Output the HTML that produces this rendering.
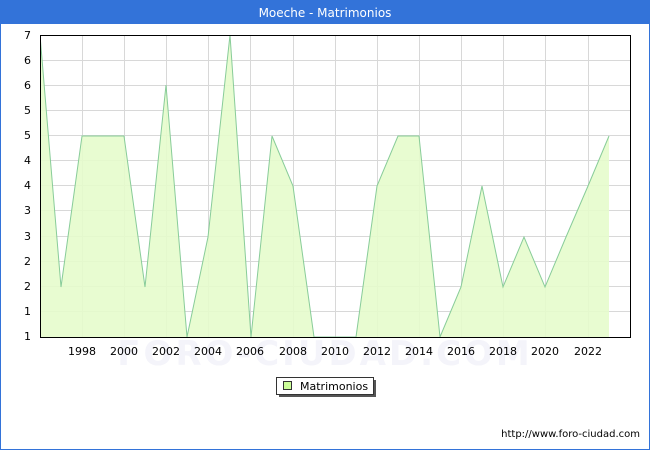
<!DOCTYPE html>
<html><head><style>
body{margin:0;width:650px;height:450px;overflow:hidden;font-family:"DejaVu Sans","Liberation Sans",sans-serif;}
</style></head><body>
<svg width="650" height="450" xmlns="http://www.w3.org/2000/svg" font-family="DejaVu Sans, Liberation Sans, sans-serif">
<rect x="0" y="0" width="650" height="450" fill="#fff"/>
<rect x="0.5" y="0.5" width="649" height="449" fill="none" stroke="#3373d9"/>
<rect x="0" y="0" width="650" height="24" fill="#3373d9"/>
<text x="325" y="17" text-anchor="middle" fill="#fff" font-size="12">Moeche - Matrimonios</text>
<text x="325" y="365" text-anchor="middle" fill="#f4f4fa" font-size="34" font-weight="bold" letter-spacing="3">FORO-CIUDAD.COM</text>
<defs><clipPath id="c"><rect x="40" y="35" width="590" height="302"/></clipPath></defs>
<g stroke="#d8d8d8" stroke-width="1">
<line x1="40" x2="630" y1="60.5" y2="60.5"/><line x1="40" x2="630" y1="85.5" y2="85.5"/><line x1="40" x2="630" y1="110.5" y2="110.5"/><line x1="40" x2="630" y1="135.5" y2="135.5"/><line x1="40" x2="630" y1="160.5" y2="160.5"/><line x1="40" x2="630" y1="185.5" y2="185.5"/><line x1="40" x2="630" y1="210.5" y2="210.5"/><line x1="40" x2="630" y1="236.5" y2="236.5"/><line x1="40" x2="630" y1="261.5" y2="261.5"/><line x1="40" x2="630" y1="286.5" y2="286.5"/><line x1="40" x2="630" y1="311.5" y2="311.5"/>
<line y1="35" y2="337" x1="82.5" x2="82.5"/><line y1="35" y2="337" x1="124.5" x2="124.5"/><line y1="35" y2="337" x1="166.5" x2="166.5"/><line y1="35" y2="337" x1="208.5" x2="208.5"/><line y1="35" y2="337" x1="250.5" x2="250.5"/><line y1="35" y2="337" x1="293.5" x2="293.5"/><line y1="35" y2="337" x1="335.5" x2="335.5"/><line y1="35" y2="337" x1="377.5" x2="377.5"/><line y1="35" y2="337" x1="419.5" x2="419.5"/><line y1="35" y2="337" x1="461.5" x2="461.5"/><line y1="35" y2="337" x1="503.5" x2="503.5"/><line y1="35" y2="337" x1="545.5" x2="545.5"/><line y1="35" y2="337" x1="588.5" x2="588.5"/>
</g>
<g clip-path="url(#c)">
<polygon fill="#e5fccc" fill-opacity="0.9" points="40,337 40,35 61,287 82,136 103,136 124,136 145,287 166,85 187,337 208,237 230,35 251,337 272,136 293,186 314,337 335,337 356,337 377,186 398,136 419,136 440,337 461,287 482,186 503,287 524,237 545,287 566,237 588,186 609,136 609,337"/>
<polyline fill="none" stroke="#88cc99" stroke-width="1" points="40,35 61,287 82,136 103,136 124,136 145,287 166,85 187,337 208,237 230,35 251,337 272,136 293,186 314,337 335,337 356,337 377,186 398,136 419,136 440,337 461,287 482,186 503,287 524,237 545,287 566,237 588,186 609,136"/>
</g>
<rect x="40.5" y="35.5" width="590" height="302" fill="none" stroke="#000"/>
<g font-size="11" fill="#000" text-anchor="end">
<text x="31" y="39">7</text><text x="31" y="64">6</text><text x="31" y="89">6</text><text x="31" y="114">5</text><text x="31" y="139">5</text><text x="31" y="164">4</text><text x="31" y="189">4</text><text x="31" y="214">3</text><text x="31" y="240">3</text><text x="31" y="265">2</text><text x="31" y="290">2</text><text x="31" y="315">1</text><text x="31" y="340">1</text>
</g>
<g font-size="11" fill="#000" text-anchor="middle">
<text x="82" y="355">1998</text><text x="124" y="355">2000</text><text x="166" y="355">2002</text><text x="208" y="355">2004</text><text x="250" y="355">2006</text><text x="293" y="355">2008</text><text x="335" y="355">2010</text><text x="377" y="355">2012</text><text x="419" y="355">2014</text><text x="461" y="355">2016</text><text x="503" y="355">2018</text><text x="545" y="355">2020</text><text x="588" y="355">2022</text>
</g>
<rect x="279" y="380" width="97" height="17" fill="#555"/>
<rect x="276.5" y="377.5" width="97" height="17" fill="#fff" stroke="#333"/>
<rect x="283.5" y="381.5" width="8" height="8" fill="#ccff99" stroke="#333"/>
<text x="300" y="390" font-size="11" fill="#000">Matrimonios</text>
<text x="640" y="437" font-size="10" fill="#000" text-anchor="end">http://www.foro-ciudad.com</text>
</svg>
</body></html>
